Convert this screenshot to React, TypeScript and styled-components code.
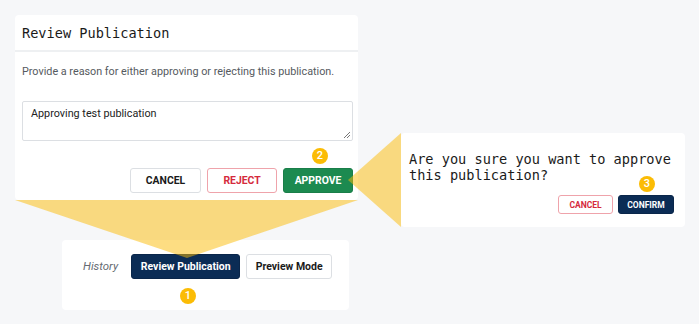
import React from 'react'
import styled, { createGlobalStyle } from 'styled-components'

const GlobalStyle = createGlobalStyle`
  html, body {
    margin: 0;
    padding: 0;
    background: #f6f7f9;
  }
  body {
    font-family: Roboto, 'Noto Sans', Arial, sans-serif;
    -webkit-font-smoothing: antialiased;
  }
`

const Canvas = styled.div`
  position: relative;
  width: 699px;
  height: 324px;
  overflow: hidden;
  background: #f6f7f9;
  display: grid;
  grid-template-columns: 343px 284px;
  column-gap: 43px;
  padding: 15px 0 0 15px;
  box-sizing: border-box;
`

const LeftColumn = styled.div`
  display: flex;
  flex-direction: column;
`

const Card = styled.div`
  position: relative;
  background: #ffffff;
  border-radius: 4px;
  box-sizing: border-box;
`

const ModalCard = styled(Card)`
  width: 343px;
  height: 185px;
  display: flex;
  flex-direction: column;
`

const ModalHeader = styled.div`
  height: 37px;
  display: flex;
  align-items: center;
  padding-left: 7px;
  border-bottom: 2px solid #eef0f2;
  box-sizing: border-box;
`

const MonoTitle = styled.h2`
  margin: 0;
  font-family: 'DejaVu Sans Mono', 'Liberation Mono', monospace;
  font-weight: 400;
  font-size: 13.6px;
  color: #1a1a1a;
`

const ModalBody = styled.div`
  padding: 13px 5px 0 7px;
  display: flex;
  flex-direction: column;
`

const Hint = styled.p`
  margin: 0;
  font-size: 10.8px;
  line-height: 14px;
  color: #555a60;
  white-space: nowrap;
`

const ReasonBox = styled.div`
  position: relative;
  margin-top: 22px;
  height: 40px;
  border: 1px solid #dcdfe3;
  border-radius: 2px;
  padding: 5px 8px;
  box-sizing: border-box;
  font-size: 10.8px;
  line-height: 14px;
  color: #222;
`

const Grip = styled.svg`
  position: absolute;
  right: 1px;
  bottom: 1px;
`

const ButtonRow = styled.div<{ $top: number; $gap: number }>`
  display: flex;
  justify-content: flex-end;
  gap: ${(p) => p.$gap}px;
  margin-top: ${(p) => p.$top}px;
`

type Variant = 'plain' | 'danger' | 'success' | 'navy'

const palette: Record<Variant, { bg: string; fg: string; border: string }> = {
  plain: { bg: '#ffffff', fg: '#1a1a1a', border: '#dcdfe3' },
  danger: { bg: '#ffffff', fg: '#d52a3c', border: '#efa3ab' },
  success: { bg: '#1c8a50', fg: '#ffffff', border: '#1a7e49' },
  navy: { bg: '#0b2c55', fg: '#ffffff', border: '#0a264a' },
}

const Button = styled.button<{ $variant: Variant; $w: number; $h: number; $size: number }>`
  width: ${(p) => p.$w}px;
  height: ${(p) => p.$h}px;
  padding: 0;
  border-radius: 3px;
  border: 1px solid ${(p) => palette[p.$variant].border};
  background: ${(p) => palette[p.$variant].bg};
  color: ${(p) => palette[p.$variant].fg};
  font-family: Roboto, Arial, sans-serif;
  font-weight: 700;
  font-size: ${(p) => p.$size}px;
  display: flex;
  align-items: center;
  justify-content: center;
  box-sizing: border-box;
  white-space: nowrap;
`

const HistoryCard = styled(Card)`
  margin: 40px 0 0 47px;
  width: 287px;
  height: 70px;
  display: flex;
  align-items: flex-start;
  padding: 14px 0 0 21px;
  gap: 6px;
`

const HistoryLabel = styled.span`
  font-style: italic;
  font-size: 11.4px;
  color: #666b72;
  line-height: 25px;
  margin-right: 7px;
`

const Popover = styled(Card)`
  margin-top: 118px;
  width: 284px;
  height: 94px;
  padding: 18px 11px 0 8px;
  z-index: 2;
`

const Question = styled.p`
  margin: 0;
  font-family: 'DejaVu Sans Mono', 'Liberation Mono', monospace;
  font-size: 13.6px;
  line-height: 16px;
  color: #1a1a1a;
`

const QuestionLine = styled.span`
  display: block;
  width: fit-content;
  white-space: nowrap;
`

const Badge = styled.span<{ $x: number; $y: number }>`
  position: absolute;
  left: ${(p) => p.$x - 8}px;
  top: ${(p) => p.$y - 8}px;
  width: 16px;
  height: 16px;
  border-radius: 50%;
  background: #fbbc05;
  color: #fff;
  font-size: 11px;
  font-weight: 500;
  line-height: 16px;
  display: flex;
  align-items: center;
  justify-content: center;
  z-index: 3;
`

const Overlay = styled.svg`
  position: absolute;
  left: 0;
  top: 0;
  pointer-events: none;
  z-index: 1;
`

export default function App() {
  return (
    <>
      <GlobalStyle />
      <Canvas>
        <LeftColumn>
          <ModalCard>
            <ModalHeader>
              <MonoTitle>Review Publication</MonoTitle>
            </ModalHeader>
            <ModalBody>
              <Hint>Provide a reason for either approving or rejecting this publication.</Hint>
              <ReasonBox>
                Approving test publication
                <Grip width="8" height="8" viewBox="0 0 8 8">
                  <path d="M7 1 L1 7 M7 4 L4 7" stroke="#777" strokeWidth="1" />
                </Grip>
              </ReasonBox>
              <ButtonRow $top={27} $gap={6}>
                <Button $variant="plain" $w={71} $h={25} $size={10.4}>CANCEL</Button>
                <Button $variant="danger" $w={70} $h={25} $size={10.4}>REJECT</Button>
                <Button $variant="success" $w={70} $h={25} $size={10.4}>APPROVE</Button>
              </ButtonRow>
            </ModalBody>
            <Badge $x={305} $y={141}>2</Badge>
          </ModalCard>

          <HistoryCard>
            <HistoryLabel>History</HistoryLabel>
            <Button $variant="navy" $w={109} $h={25} $size={10.5}>Review Publication</Button>
            <Button $variant="plain" $w={86} $h={25} $size={10.5}>Preview Mode</Button>
            <Badge $x={126} $y={56}>1</Badge>
          </HistoryCard>
        </LeftColumn>

        <Popover>
          <Question>
            <QuestionLine>Are you sure you want to approve</QuestionLine>
            <QuestionLine>this publication?</QuestionLine>
          </Question>
          <ButtonRow $top={12} $gap={5}>
            <Button $variant="danger" $w={55} $h={19} $size={8.5}>CANCEL</Button>
            <Button $variant="navy" $w={56} $h={19} $size={8.5}>CONFIRM</Button>
          </ButtonRow>
          <Badge $x={246} $y={51}>3</Badge>
        </Popover>

        <Overlay width="699" height="324" viewBox="0 0 699 324">
          <polygon points="15,200 358,200 187,258" fill="#fbbc05" fillOpacity="0.5" />
          <polygon points="348,180 401,133 401,227" fill="#fbbc05" fillOpacity="0.5" />
        </Overlay>
      </Canvas>
    </>
  )
}
